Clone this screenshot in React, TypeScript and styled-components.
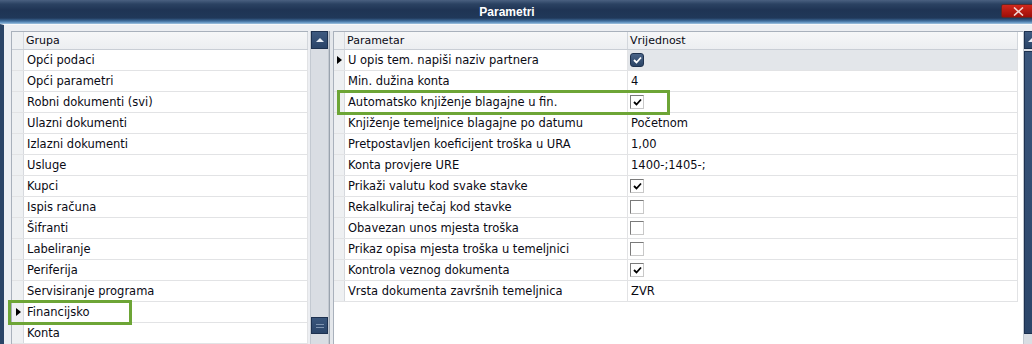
import styled, { createGlobalStyle } from "styled-components"

const GlobalStyle = createGlobalStyle`
    html, body {
        margin: 0;
        padding: 0;
        background: #e9ecf0;
    }
`
const Window = styled.div`
    width: 1032px;
    height: 344px;
    overflow: hidden;
    display: flex;
    flex-direction: column;
    font-family: "DejaVu Sans", Verdana, sans-serif;
    font-size: 11.5px;
    color: #0a0a14;
`
const TitleBar = styled.div`
    height: 24px;
    flex-shrink: 0;
    position: relative;
    display: flex;
    align-items: center;
    justify-content: center;
    box-sizing: border-box;
    background: linear-gradient(#4a6080 0px, #2b4262 4px, #1f3454 10px, #203859 18px, #3f6d9c 21px, #76a6d0 23px, #a9c4dc 24px);
    color: white;
    font-family: "Liberation Sans", Arial, sans-serif;
    font-weight: bold;
    font-size: 12px;
    padding: 0 18px 1px 0;
`
const CloseButton = styled.div`
    position: absolute;
    right: -4px;
    top: 4px;
    width: 35px;
    height: 14px;
    box-sizing: border-box;
    border: 1px solid #5b2a2a;
    border-radius: 2px;
    background: linear-gradient(#d0281c, #9e0e08);
    display: flex;
    align-items: center;
    justify-content: center;
`
const Body = styled.div`
    flex: 1;
    display: flex;
    min-height: 0;
    overflow: hidden;
    border-left: 4px solid #2a4466;
    background: #eceef2;
    padding: 6px 0 0 7px;
    border-top: 1px solid #f7f8fa;
`
const Pane = styled.div<{ $width: number }>`
    display: flex;
    width: ${p => p.$width}px;
    flex-shrink: 0;
`
const Splitter = styled.div`
    width: 4px;
    flex-shrink: 0;
    background: #e4e7eb;
    border-left: 1px solid #9aa3ae;
    box-sizing: border-box;
`
const Grid = styled.div`
    flex: 1;
    min-width: 0;
    display: flex;
    flex-direction: column;
    border-top: 1px solid #a9b1bc;
    border-left: 1px solid #a9b1bc;
    background: #ffffff;
`
const Row = styled.div<{ $cols: string; $header?: boolean; $width?: number }>`
    position: relative;
    display: grid;
    grid-template-columns: ${p => p.$cols};
    height: ${p => p.$header ? 18 : 21}px;
    ${p => p.$width ? `width: ${p.$width}px;` : ""}
    flex-shrink: 0;
    box-sizing: border-box;
    border-bottom: 1px solid ${p => p.$header ? "#c9ced5" : "#e2e3e5"};
    background: ${p => p.$header ? "linear-gradient(#f6f7f8, #eceef1)" : "#ffffff"};
`
const Indicator = styled.div`
    background: #eef0f2;
    border-right: 1px solid #d6d9de;
    display: flex;
    align-items: center;
    justify-content: center;
`
const Arrow = styled.div`
    width: 0;
    height: 0;
    border-top: 4px solid transparent;
    border-bottom: 4px solid transparent;
    border-left: 5px solid #000;
    margin-left: 1px;
`
const Cell = styled.div<{ $active?: boolean }>`
    display: flex;
    align-items: center;
    padding-left: 3px;
    white-space: nowrap;
    overflow: hidden;
    border-right: 1px solid #e2e3e5;
    background: ${p => p.$active ? "#e3e6ea" : "transparent"};
`
const HeaderCell = styled(Cell)`
    padding-left: 2px;
    font-size: 11px;
    border-right-color: #d3d7dc;
`
const Check = styled.div<{ $focused?: boolean }>`
    width: 14px;
    height: 14px;
    box-sizing: border-box;
    margin-left: -1px;
    display: flex;
    align-items: center;
    justify-content: center;
    ${p => p.$focused
        ? `background: linear-gradient(#4a6488, #2b4466); border: 1px solid #1f3350; border-radius: 3px;`
        : `background: #fff; border: 1px solid #7a7a7a; border-right-color: #c8c8c8; border-bottom-color: #c8c8c8;`}
`
const Highlight = styled.div<{ $left: number; $width: number }>`
    position: absolute;
    left: ${p => p.$left}px;
    width: ${p => p.$width}px;
    top: -2px;
    height: 25px;
    box-sizing: border-box;
    border: 3px solid #6da536;
    pointer-events: none;
    z-index: 2;
`
const ScrollBar = styled.div<{ $gap: number; $width: number }>`
    width: ${p => p.$width}px;
    flex-shrink: 0;
    margin-left: ${p => p.$gap}px;
    display: flex;
    flex-direction: column;
    background: #d9dde3;
    border-left: 1px solid #c3c9d1;
    border-right: 1px solid #c3c9d1;
    box-sizing: border-box;
`
const ScrollButton = styled.div`
    height: 18px;
    flex-shrink: 0;
    box-sizing: border-box;
    border: 1px solid #1d3150;
    background: linear-gradient(#3e5a80, #2a4468);
    display: flex;
    align-items: center;
    justify-content: center;
`
const UpTriangle = styled.div`
    width: 0;
    height: 0;
    border-left: 4px solid transparent;
    border-right: 4px solid transparent;
    border-bottom: 4px solid #e8eef6;
`
const Track = styled.div<{ $end?: boolean }>`
    flex: 1;
    display: flex;
    flex-direction: column;
    justify-content: ${p => p.$end ? "flex-end" : "stretch"};
    padding: 2px 0 10px;
`
const Thumb = styled.div<{ $grow?: boolean }>`
    ${p => p.$grow ? "flex: 1;" : "height: 17px;"}
    box-sizing: border-box;
    border: 1px solid #1d3150;
    background: linear-gradient(#3a567c, #2b4569);
    display: flex;
    flex-direction: column;
    align-items: center;
    justify-content: center;
    gap: 2px;
`
const Grip = styled.div`
    width: 8px;
    height: 1px;
    background: #7e93b0;
`

function CheckMark({ light }: { light?: boolean }) {
    return (
        <svg width="9" height="8" viewBox="0 0 9 8">
            <path d="M1 4 L3.5 6.5 L8 1.5" fill="none" stroke={light ? "#ffffff" : "#000000"} strokeWidth="1.8" />
        </svg>
    )
}

const groups = [
    "Opći podaci", "Opći parametri", "Robni dokumenti (svi)", "Ulazni dokumenti",
    "Izlazni dokumenti", "Usluge", "Kupci", "Ispis računa", "Šifranti", "Labeliranje",
    "Periferija", "Servisiranje programa", "Financijsko", "Konta", "",
]

type Param = { name: string; value?: string; check?: boolean }

const params: Param[] = [
    { name: "U opis tem. napiši naziv partnera", check: true },
    { name: "Min. dužina konta", value: "4" },
    { name: "Automatsko knjiženje blagajne u fin.", check: true },
    { name: "Knjiženje temeljnice blagajne po datumu", value: "Početnom" },
    { name: "Pretpostavljen koeficijent troška u URA", value: "1,00" },
    { name: "Konta provjere URE", value: "1400-;1405-;" },
    { name: "Prikaži valutu kod svake stavke", check: true },
    { name: "Rekalkuliraj tečaj kod stavke", check: false },
    { name: "Obavezan unos mjesta troška", check: false },
    { name: "Prikaz opisa mjesta troška u temeljnici", check: false },
    { name: "Kontrola veznog dokumenta", check: true },
    { name: "Vrsta dokumenta završnih temeljnica", value: "ZVR" },
]

const leftCols = "12px 1fr"
const rightCols = "11px 283px 1fr"

export default function App() {
    return (
        <Window>
            <GlobalStyle />
            <TitleBar>
                Parametri
                <CloseButton>
                    <svg width="11" height="9" viewBox="0 0 11 9">
                        <path d="M1 0.5 L10 8.5 M10 0.5 L1 8.5" stroke="#f2d6d2" strokeWidth="1.6" />
                    </svg>
                </CloseButton>
            </TitleBar>
            <Body>
                <Pane $width={318}>
                    <Grid>
                        <Row $cols={leftCols} $header>
                            <Indicator />
                            <HeaderCell>Grupa</HeaderCell>
                        </Row>
                        {groups.map((g, i) => (
                            <Row $cols={leftCols} key={i}>
                                <Indicator>{g === "Financijsko" && <Arrow />}</Indicator>
                                <Cell>{g}</Cell>
                                {g === "Financijsko" && <Highlight $left={-4} $width={124} />}
                            </Row>
                        ))}
                    </Grid>
                    <ScrollBar $gap={2} $width={19}>
                        <ScrollButton><UpTriangle /></ScrollButton>
                        <Track $end>
                            <Thumb><Grip /><Grip /></Thumb>
                        </Track>
                    </ScrollBar>
                </Pane>
                <Splitter />
                <Pane $width={708}>
                    <Grid>
                        <Row $cols={rightCols} $header $width={684}>
                            <Indicator />
                            <HeaderCell>Parametar</HeaderCell>
                            <HeaderCell>Vrijednost</HeaderCell>
                        </Row>
                        {params.map((p, i) => (
                            <Row $cols={rightCols} $width={684} key={p.name}>
                                <Indicator>{i === 0 && <Arrow />}</Indicator>
                                <Cell>{p.name}</Cell>
                                <Cell $active={i === 0}>
                                    {p.check === undefined
                                        ? p.value
                                        : <Check $focused={i === 0}>{p.check && <CheckMark light={i === 0} />}</Check>}
                                </Cell>
                                {i === 2 && <Highlight $left={3} $width={333} />}
                            </Row>
                        ))}
                    </Grid>
                    <ScrollBar $gap={0} $width={18}>
                        <ScrollButton><UpTriangle /></ScrollButton>
                        <Track>
                            <Thumb $grow />
                        </Track>
                    </ScrollBar>
                </Pane>
            </Body>
        </Window>
    )
}
